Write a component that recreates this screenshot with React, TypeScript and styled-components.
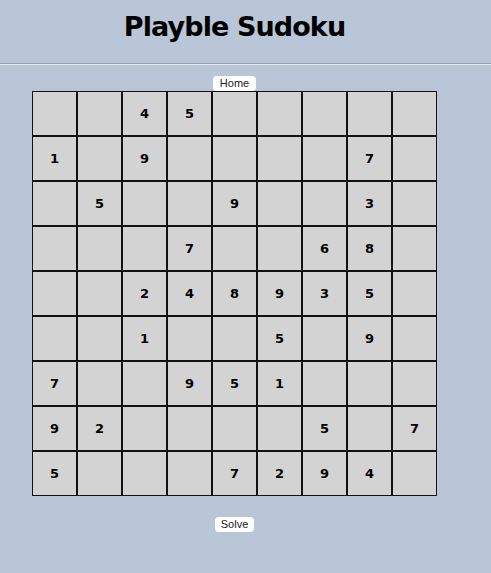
import { useState } from "react";
import styled, { createGlobalStyle } from "styled-components";

const GlobalStyle = createGlobalStyle`
  html, body {
    margin: 0;
    padding: 0;
    background: #b9c6d7;
  }
  body {
    font-family: "DejaVu Sans", Verdana, sans-serif;
  }
`;

const PUZZLE = [
  "004500000",
  "109000070",
  "050090030",
  "000700680",
  "002489350",
  "001005090",
  "700951000",
  "920000507",
  "500072940",
];

export default function App() {
  const [cells, setCells] = useState<string[][]>(() =>
    PUZZLE.map((row) => row.split("").map((c) => (c === "0" ? "" : c)))
  );

  const handleChange = (r: number, c: number, value: string) => {
    const digit = value.replace(/[^1-9]/g, "").slice(-1);
    setCells((prev) =>
      prev.map((row, ri) =>
        ri === r ? row.map((v, ci) => (ci === c ? digit : v)) : row
      )
    );
  };

  return (
    <Page>
      <GlobalStyle />
      <Title>Playble Sudoku</Title>
      <Divider />
      <Main>
        <SmallButton type="button">Home</SmallButton>
        <Board>
          {cells.map((row, r) =>
            row.map((value, c) => (
              <Cell
                key={`${r}-${c}`}
                value={value}
                maxLength={1}
                onChange={(e) => handleChange(r, c, e.target.value)}
              />
            ))
          )}
        </Board>
        <SolveButton type="button">Solve</SolveButton>
      </Main>
    </Page>
  );
}

const Page = styled.div`
  width: 469px;
  min-height: 573px;
`;

const Title = styled.h1`
  margin: 0;
  padding-top: 11px;
  height: 54px;
  box-sizing: border-box;
  text-align: center;
  font-family: "DejaVu Sans", Verdana, sans-serif;
  font-weight: bold;
  font-size: 27px;
  letter-spacing: -0.9px;
  color: #000;
`;

const Divider = styled.hr`
  margin: 9px 0 0;
  width: 491px;
  border: none;
  border-top: 1px solid #98a2ad;
  border-bottom: 1px solid #e4e9ef;
`;

const Main = styled.div`
  display: flex;
  flex-direction: column;
  align-items: center;
  padding-top: 11px;
`;

const SmallButton = styled.button`
  height: 15px;
  padding: 0 7px;
  border: none;
  border-radius: 4px;
  background: #fff;
  color: #222;
  font-family: "Liberation Sans", Arial, sans-serif;
  font-size: 11px;
  line-height: 15px;
  cursor: pointer;
`;

const SolveButton = styled(SmallButton)`
  margin-top: 21px;
  padding: 0 6px;
`;

const Board = styled.div`
  display: grid;
  grid-template-columns: repeat(9, 45px);
  grid-auto-rows: 45px;
`;

const Cell = styled.input`
  box-sizing: border-box;
  width: 45px;
  height: 45px;
  margin: 0;
  padding: 0;
  border: 1px solid #111;
  background: #d3d3d3;
  text-align: center;
  font-family: "DejaVu Sans", Verdana, sans-serif;
  font-weight: bold;
  font-size: 13px;
  color: #000;
  outline: none;
`;
